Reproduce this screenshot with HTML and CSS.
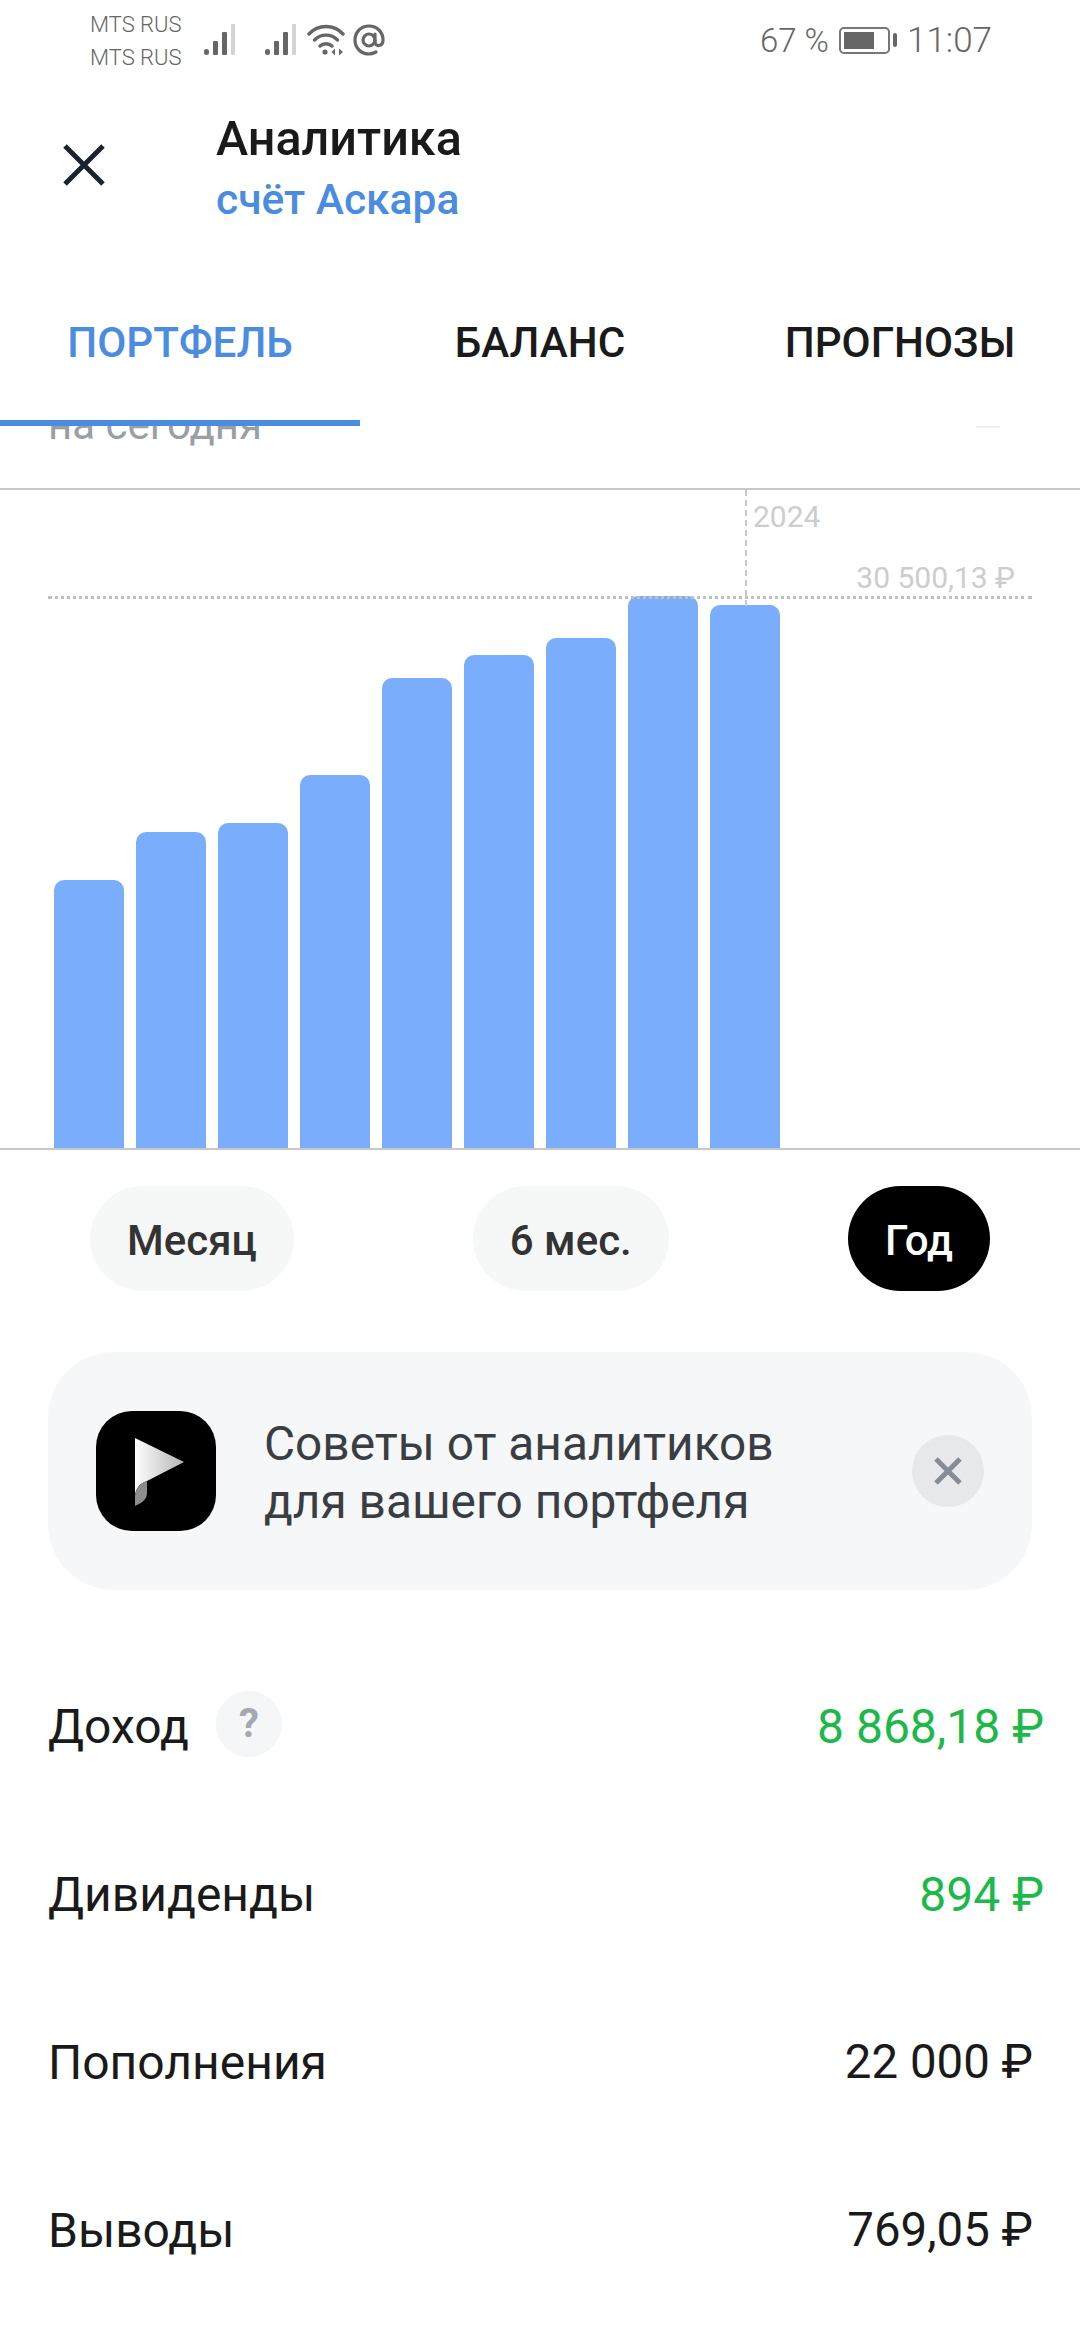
FILE: index.html
```html
<!DOCTYPE html>
<html lang="ru">
<head>
    <meta charset="UTF-8">
    <meta name="viewport" content="width=device-width, initial-scale=1.0">
    <title>Аналитика</title>
    <link rel="stylesheet" href="styles.css">
</head>
<body>
    <!-- Статус-бар -->
    <div class="status-bar">
        <div class="carriers">
            <span>MTS RUS</span>
            <span>MTS RUS</span>
        </div>
        <svg class="signal" width="32" height="32" viewBox="0 0 32 32">
            <rect x="0" y="25" width="5" height="6" rx="2.5" fill="#666"/>
            <rect x="9" y="17" width="5" height="14" rx="1" fill="#666"/>
            <rect x="18" y="8" width="5" height="23" rx="1" fill="#666"/>
            <rect x="27" y="0" width="4" height="31" rx="1" fill="#d4d4d4"/>
        </svg>
        <svg class="signal signal-two" width="32" height="32" viewBox="0 0 32 32">
            <rect x="0" y="25" width="5" height="6" rx="2.5" fill="#666"/>
            <rect x="9" y="17" width="5" height="14" rx="1" fill="#666"/>
            <rect x="18" y="8" width="5" height="23" rx="1" fill="#666"/>
            <rect x="27" y="0" width="4" height="31" rx="1" fill="#d4d4d4"/>
        </svg>
        <svg class="wifi" width="38" height="32" viewBox="0 0 38 32" fill="none" stroke="#666" stroke-width="3.4" stroke-linecap="round">
            <path d="M2 10C11 0 27 0 36 10"/>
            <path d="M7.5 16C14 9.5 24 9.5 30.500 16"/>
            <path d="M13 22C16 19 22 19 25 22"/>
            <circle cx="18" cy="28" r="2.600" fill="#666" stroke="none"/>
            <path d="M28 24.500L24.500 28L28 31.500Z" fill="#666" stroke="none"/>
            <path d="M32 24.500L36 28L32 31.500Z" fill="#666" stroke="none"/>
        </svg>
        <svg class="at" width="32" height="32" viewBox="0 0 32 32" fill="none" stroke="#666" stroke-width="3.200" stroke-linecap="round">
            <circle cx="16" cy="16" r="6"/>
            <path d="M22 10V18C22 23 30 23 30 16C30 8 24 2 16 2C8 2 2 8 2 16C2 24 8 30 16 30C19 30 21 29 23 28"/>
        </svg>
        <div class="status-right">
            <span class="percent">67 %</span>
            <div class="battery">
                <div class="battery-level"></div>
            </div>
            <div class="battery-tip"></div>
            <span class="clock">11:07</span>
        </div>
    </div>

    <!-- Заголовок -->
    <div class="header">
        <svg class="close-icon" width="42" height="42" viewBox="0 0 42 42" stroke="#1a2430" stroke-width="5">
            <path d="M2 2L40 40M40 2L2 40"/>
        </svg>
        <div class="header-text">
            <h1>Аналитика</h1>
            <p>счёт Аскара</p>
        </div>
    </div>

    <!-- Вкладки -->
    <div class="tabs">
        <div class="tab active">ПОРТФЕЛЬ</div>
        <div class="tab">БАЛАНС</div>
        <div class="tab">ПРОГНОЗЫ</div>
    </div>

    <!-- Текст, уехавший под вкладки -->
    <div class="scrolled-row">
        <span class="scrolled-text">на сегодня</span>
        <span class="scrolled-mark"></span>
    </div>

    <!-- График -->
    <div class="chart">
        <div class="bar" style="height: 268px"></div>
        <div class="bar" style="height: 316px"></div>
        <div class="bar" style="height: 325px"></div>
        <div class="bar" style="height: 373px"></div>
        <div class="bar" style="height: 470px"></div>
        <div class="bar" style="height: 493px"></div>
        <div class="bar" style="height: 510px"></div>
        <div class="bar" style="height: 552px"></div>
        <div class="bar" style="height: 543px"></div>
        <div class="line-max"></div>
        <div class="line-year"></div>
        <span class="label-year">2024</span>
        <span class="label-max">30 500,13 ₽</span>
    </div>

    <!-- Период -->
    <div class="periods">
        <div class="period">Месяц</div>
        <div class="period">6 мес.</div>
        <div class="period selected">Год</div>
    </div>

    <!-- Карточка с советами -->
    <div class="tip-card">
        <svg class="tip-icon" width="120" height="120" viewBox="0 0 120 120">
            <defs>
                <linearGradient id="playFill" x1="0" y1="0" x2="1" y2="0">
                    <stop offset="0" stop-color="#ffffff"/>
                    <stop offset="1" stop-color="#b4b4b4"/>
                </linearGradient>
            </defs>
            <rect width="120" height="120" rx="36" fill="#000"/>
            <path d="M39 27L88 51L51 70C44 72 39 78 39 86Z" fill="url(#playFill)"/>
            <path d="M39 95V86C39 78 44 72 51 70V82C51 88 46 92 39 95Z" fill="#8c8c8c"/>
        </svg>
        <div class="tip-text">Советы от аналитиков<br>для вашего портфеля</div>
        <div class="tip-close">
            <svg width="30" height="30" viewBox="0 0 30 30" stroke="#868c96" stroke-width="5">
                <path d="M3 3L27 27M27 3L3 27"/>
            </svg>
        </div>
    </div>

    <!-- Итоги -->
    <div class="summary">
        <div class="row">
            <div class="row-label">Доход <span class="hint">?</span></div>
            <div class="row-value green">8 868,18 ₽</div>
        </div>
        <div class="row">
            <div class="row-label">Дивиденды</div>
            <div class="row-value green">894 ₽</div>
        </div>
        <div class="row">
            <div class="row-label">Пополнения</div>
            <div class="row-value">22 000 ₽</div>
        </div>
        <div class="row">
            <div class="row-label">Выводы</div>
            <div class="row-value">769,05 ₽</div>
        </div>
    </div>
</body>
</html>
```

FILE: styles.css
```css
body {
    margin: 0;
    background-color: #fff;
    color: #1a1a1a;
    font-family: Roboto, "Noto Sans", sans-serif;
    overflow: hidden;
}

.status-bar {
    display: flex;
    align-items: center;
    height: 80px;
    padding-left: 90px;
    color: #666;
}

.carriers {
    display: flex;
    flex-direction: column;
    width: 114px;
    margin-top: 2px;
    font-size: 22px;
    line-height: 33px;
    font-weight: 300;
}

.signal-two {
    margin-left: 29px;
}

.wifi {
    margin-left: 10px;
}

.at {
    margin-left: 8px;
}

.status-right {
    display: flex;
    align-items: center;
    margin-left: auto;
    padding-right: 88px;
}

.percent {
    font-size: 33px;
    font-weight: 300;
    margin-right: 10px;
}

.battery {
    width: 51px;
    height: 27px;
    box-sizing: border-box;
    border: 2px solid #777;
    border-radius: 5px;
    padding: 3px;
}

.battery-level {
    width: 30px;
    height: 100%;
    background-color: #666;
}

.battery-tip {
    width: 4px;
    height: 14px;
    background-color: #666;
    border-radius: 2px;
    margin-left: 3px;
}

.clock {
    font-size: 35px;
    font-weight: 300;
    margin-left: 10px;
}

.header {
    display: flex;
    align-items: center;
    height: 200px;
    box-sizing: border-box;
    padding: 0 0 30px 63px;
}

.header-text {
    margin-left: 111px;
    padding-top: 8px;
}

.header-text h1 {
    margin: 0;
    font-size: 48.5px;
    line-height: 60px;
    font-weight: 500;
}

.header-text p {
    margin: 1px 0 0;
    font-size: 42.5px;
    line-height: 60px;
    font-weight: 500;
    color: #4a8ce0;
}

.tabs {
    display: grid;
    grid-template-columns: repeat(3, 360px);
    height: 146px;
    position: relative;
    z-index: 1;
    background-color: #fff;
}

.tab {
    box-sizing: border-box;
    height: 146px;
    padding-top: 38px;
    text-align: center;
    font-size: 42.2px;
    line-height: 50px;
    font-weight: 500;
    border-bottom: 6px solid transparent;
}

.tab.active {
    color: #4a8ce0;
    border-bottom-color: #4a8ce0;
}

.scrolled-row {
    display: flex;
    justify-content: space-between;
    height: 62px;
    box-sizing: border-box;
    padding: 0 80px 0 48px;
    overflow: hidden;
}

.scrolled-text {
    margin-top: -26px;
    font-size: 42px;
    line-height: 50px;
    height: 50px;
    color: #9a9ea5;
}

.scrolled-mark {
    width: 24px;
    height: 2px;
    background-color: #eeeeee;
    border-radius: 1px;
}

.chart {
    display: flex;
    align-items: flex-end;
    gap: 12px;
    position: relative;
    height: 662px;
    box-sizing: border-box;
    padding-left: 54px;
    border-top: 2px solid #c8c8c8;
    border-bottom: 2px solid #c8c8c8;
}

.bar {
    width: 70px;
    background-color: #7aadfb;
    border-radius: 10px 10px 0 0;
}

.line-max {
    position: absolute;
    left: 48px;
    right: 48px;
    top: 106px;
    border-top: 3px dotted #c0c0c0;
}

.line-year {
    position: absolute;
    left: 745px;
    top: 0;
    height: 116px;
    border-left: 2px dashed #c8c8c8;
}

.label-year {
    position: absolute;
    left: 753px;
    top: 10px;
    font-size: 30px;
    line-height: 34px;
    color: #cdcdcd;
}

.label-max {
    position: absolute;
    right: 65px;
    top: 71px;
    font-size: 30px;
    line-height: 34px;
    color: #cdcdcd;
}

.periods {
    display: flex;
    justify-content: space-between;
    margin-top: 36px;
    padding: 0 90px;
}

.period {
    display: flex;
    align-items: center;
    height: 105px;
    box-sizing: border-box;
    padding: 4px 37px 0;
    border-radius: 53px;
    background-color: #f6f7f7;
    color: #333;
    font-size: 42px;
    font-weight: 500;
}

.period.selected {
    background-color: #000;
    color: #fff;
}

.tip-card {
    display: flex;
    align-items: center;
    height: 238px;
    box-sizing: border-box;
    margin: 61px 48px 0;
    padding: 0 48px;
    border-radius: 66px;
    background-color: #f5f7f9;
}

.tip-text {
    margin-left: 48px;
    padding-top: 3px;
    font-size: 47.8px;
    line-height: 58px;
    color: #3a3d42;
}

.tip-close {
    display: flex;
    align-items: center;
    justify-content: center;
    width: 72px;
    height: 72px;
    margin-left: auto;
    margin-right: 0;
    border-radius: 50%;
    background-color: #e6e8eb;
}

.summary {
    margin-top: 52px;
}

.row {
    display: flex;
    align-items: center;
    justify-content: space-between;
    height: 168px;
    padding: 0 48px;
    font-size: 48px;
}

.row-label {
    display: flex;
    align-items: center;
}

.hint {
    display: flex;
    align-items: center;
    justify-content: center;
    width: 66px;
    height: 66px;
    margin: -5px 0 0 27px;
    border-radius: 50%;
    background-color: #f5f6f7;
    color: #a4a8b0;
    font-size: 40px;
    font-weight: 700;
}

.row-value {
    margin-right: -1px;
    font-size: 47.4px;
}

.row-value.green {
    color: #1db84a;
    margin-right: -12px;
    font-size: 48px;
}
```
